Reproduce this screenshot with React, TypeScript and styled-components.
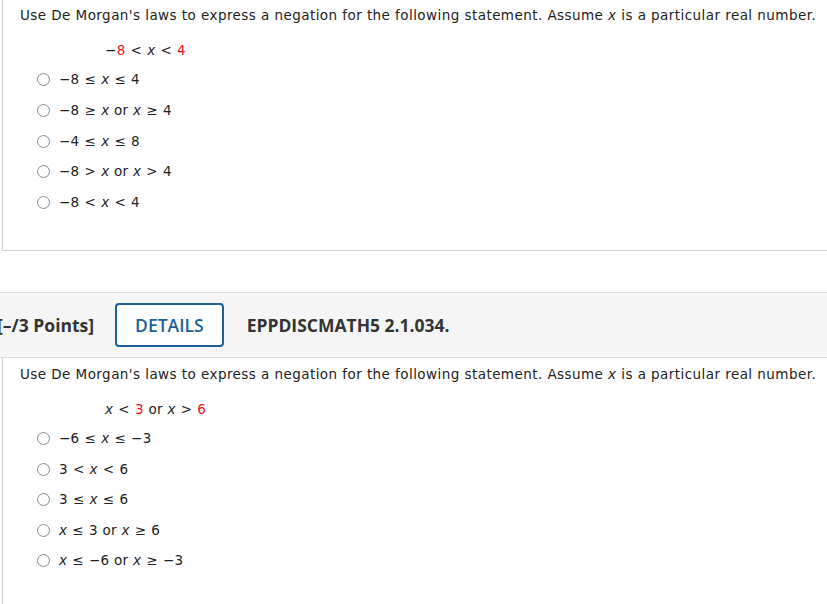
import React from 'react';
import styled, { createGlobalStyle } from 'styled-components';

const GlobalStyle = createGlobalStyle`
  html, body {
    margin: 0;
    padding: 0;
    background: #fff;
    overflow: hidden;
  }
  body {
    font-family: 'DejaVu Sans', Verdana, sans-serif;
    color: #222;
  }
`;

const Page = styled.div`
  width: 827px;
  padding-left: 2px;
  box-sizing: border-box;
`;

const QuestionCard = styled.div<{ $height: number; $top: number; $closed?: boolean }>`
  box-sizing: border-box;
  height: ${(p) => p.$height}px;
  margin-right: -20px;
  border-left: 1px solid #cfcfcf;
  border-bottom: ${(p) => (p.$closed ? '1px solid #cfcfcf' : 'none')};
  padding: ${(p) => p.$top}px 0 0 17px;
`;

const Prompt = styled.p`
  margin: 0;
  font-size: 13.5px;
  line-height: 16px;
  letter-spacing: 0.44px;
  white-space: nowrap;
`;

const Statement = styled.div`
  margin: 19px 0 0 85px;
  font-size: 13.5px;
  line-height: 16px;
  letter-spacing: 0.3px;
  white-space: nowrap;
`;

const Options = styled.ul<{ $step: number }>`
  list-style: none;
  margin: 13px 0 0 17px;
  padding: 0;
  display: grid;
  grid-auto-rows: ${(p) => p.$step}px;
`;

const Option = styled.li`
  display: flex;
  align-items: flex-start;
  gap: 9px;
  font-size: 13.5px;
  line-height: 16px;
  letter-spacing: 0.3px;
  white-space: nowrap;
`;

const Radio = styled.span`
  box-sizing: border-box;
  width: 13px;
  height: 13px;
  margin-top: 2px;
  border: 1px solid #8a8a8a;
  border-radius: 50%;
  background: #fff;
  flex: none;
`;

const Var = styled.i`
  font-style: italic;
`;

const Red = styled.span`
  color: #e8141b;
`;

const Op = styled.span`
  padding: 0 5px;
`;

const HeaderBar = styled.div`
  box-sizing: border-box;
  height: 66px;
  margin: 0 -20px 0 -2px;
  background: #f5f5f5;
  border-top: 1px solid #dcdcdc;
  border-bottom: 1px solid #dcdcdc;
  display: flex;
  align-items: center;
  font-family: 'Open Sans', sans-serif;
  font-size: 17.5px;
  font-weight: 700;
  color: #333;
  white-space: nowrap;
`;

const Points = styled.span`
  margin-left: -3px;
`;

const DetailsButton = styled.button`
  box-sizing: border-box;
  height: 44px;
  margin: 0 23px 0 21px;
  padding: 0 18px;
  background: #fff;
  border: 2px solid #1d5f98;
  border-radius: 4px;
  font-family: 'Open Sans', sans-serif;
  font-size: 17.5px;
  font-weight: 600;
  color: #1d5f98;
`;

const Gap = styled.div`
  height: 41px;
`;

type Piece = string | { v: true } | { r: string } | { op: string };

const renderMath = (pieces: Piece[]) =>
  pieces.map((p, i) => {
    if (typeof p === 'string') return <span key={i}>{p}</span>;
    if ('v' in p) return <Var key={i}>x</Var>;
    if ('r' in p) return <Red key={i}>{p.r}</Red>;
    return <Op key={i}>{p.op}</Op>;
  });

const X = { v: true } as const;
const op = (s: string) => ({ op: s });

const PROMPT = (
  <>
    Use De Morgan's laws to express a negation for the following statement. Assume <Var>x</Var> is a
    particular real number.
  </>
);

const q1Statement: Piece[] = ['−', { r: '8' }, op('<'), X, op('<'), { r: '4' }];
const q1Options: Piece[][] = [
  ['−8', op('≤'), X, op('≤'), '4'],
  ['−8', op('≥'), X, ' or ', X, op('≥'), '4'],
  ['−4', op('≤'), X, op('≤'), '8'],
  ['−8', op('>'), X, ' or ', X, op('>'), '4'],
  ['−8', op('<'), X, op('<'), '4'],
];

const q2Statement: Piece[] = [X, op('<'), { r: '3' }, ' or ', X, op('>'), { r: '6' }];
const q2Options: Piece[][] = [
  ['−6', op('≤'), X, op('≤'), '−3'],
  ['3', op('<'), X, op('<'), '6'],
  ['3', op('≤'), X, op('≤'), '6'],
  [X, op('≤'), '3 or ', X, op('≥'), '6'],
  [X, op('≤'), '−6 or ', X, op('≥'), '−3'],
];

const Question: React.FC<{
  statement: Piece[];
  options: Piece[][];
  height: number;
  top: number;
  step: number;
  closed?: boolean;
}> = ({ statement, options, height, top, step, closed }) => (
  <QuestionCard $height={height} $top={top} $closed={closed}>
    <Prompt>{PROMPT}</Prompt>
    <Statement>{renderMath(statement)}</Statement>
    <Options $step={step}>
      {options.map((o, i) => (
        <Option key={i}>
          <Radio />
          <span>{renderMath(o)}</span>
        </Option>
      ))}
    </Options>
  </QuestionCard>
);

export default function App() {
  return (
    <Page>
      <GlobalStyle />
      <Question statement={q1Statement} options={q1Options} height={251} top={7} step={30.75} closed />
      <Gap />
      <HeaderBar>
        <Points>[–/3 Points]</Points>
        <DetailsButton type="button">DETAILS</DetailsButton>
        <span>EPPDISCMATH5 2.1.034.</span>
      </HeaderBar>
      <Question statement={q2Statement} options={q2Options} height={260} top={8} step={30.5} />
    </Page>
  );
}
